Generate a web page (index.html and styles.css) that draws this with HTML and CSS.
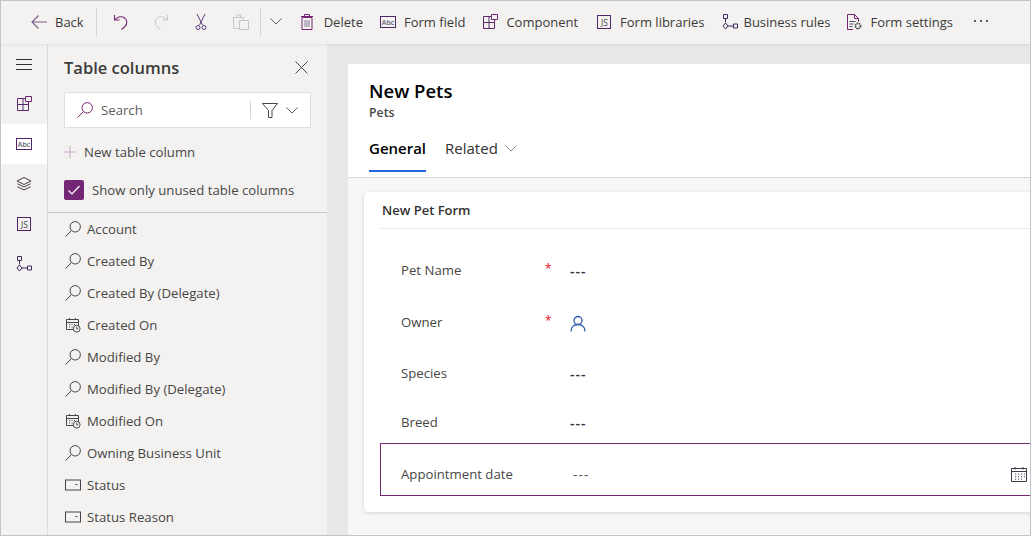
FILE: index.html
```html
<!DOCTYPE html>
<html lang="en">
<head>
    <meta charset="UTF-8">
    <title>New Pets - Form editor</title>
    <link rel="stylesheet" href="styles.css">
</head>
<body>
    <!-- shared icons -->
    <svg class="sprite" xmlns="http://www.w3.org/2000/svg">
        <symbol id="i-search" viewBox="0 0 16 16"><circle cx="10.200" cy="5.800" r="5.200" fill="none" stroke="currentColor"/><path d="M6.500 9.500 .6 15.500" fill="none" stroke="currentColor"/></symbol>
        <symbol id="i-comp" viewBox="0 0 16 16"><g fill="none"><path d="M1.500 2.500h11v12h-11zM1.500 8.500h11M7 2.500v12" stroke="#5a2a6c"/><path d="M9.500.5h6v5h-6z" fill="#f3f2f1" stroke="#742774"/></g></symbol>
        <symbol id="i-abc" viewBox="0 0 16 12"><rect x=".5" y=".5" width="15" height="11" fill="none" stroke="#4f2468"/><text x="8" y="8.800" text-anchor="middle" font-family="Open Sans" font-size="7" font-weight="600" fill="#5f5f78">Abc</text></symbol>
        <symbol id="i-js" viewBox="0 0 14 14"><rect x=".5" y=".5" width="13" height="13" fill="none" stroke="#4f2468"/><text x="7.500" y="11.300" text-anchor="middle" font-family="Open Sans" font-size="8.500" fill="#444">JS</text></symbol>
        <symbol id="i-rules" viewBox="0 0 16 16"><g fill="none" stroke="#3b2a5c"><path d="M1.500.5h4v4h-4zM11.500 10h4v4h-4z"/><path d="M3.500 4.500v4M6 12h5.500"/><path d="M3.500 9 6 12 3.500 15 1 12z"/></g></symbol>
        <symbol id="i-date" viewBox="0 0 16 16"><g fill="none" stroke="#484644"><path d="M1.500 2.500h12v10h-12zM1.500 5.500h12M4.500 1v2M10.500 1v2"/><circle cx="11.700" cy="11.700" r="3.400" fill="#f3f2f1"/><path d="M11.700 9.800v2h1.500"/></g><path d="M4 7h1v1H4zM6.500 7h1v1h-1zM9 7h1v1H9zM4 9.500h1v1H4zM6.500 9.500h1v1h-1z" fill="#484644"/></symbol>
        <symbol id="i-option" viewBox="0 0 16 11"><rect x=".5" y=".5" width="15" height="10" fill="none" stroke="#484644"/><path d="M10.500 5h2" stroke="#484644"/></symbol>
        <symbol id="i-chev" viewBox="0 0 12 7"><path d="M.5.500 6 6l5.500-5.500" fill="none" stroke="currentColor"/></symbol>
    </svg>

    <div class="frame">
        <header class="toolbar">
            <button class="tool tool-back">
                <svg class="ico" viewBox="0 0 16 16"><path d="M16 8H1M7.500 1.500 1 8l6.500 6.500" fill="none" stroke="#7d5a85" stroke-width="1.100"/></svg>
                <span>Back</span>
            </button>
            <span class="tool-sep"></span>
            <svg class="ico ico-undo" viewBox="0 0 16 16"><path d="M1.500 1v5h5M1.700 6C4 3 8 2 11 3.500c3.500 2 3.500 6.500 1 9L8.500 15.500" fill="none" stroke="#742774" stroke-width="1.100"/></svg>
            <svg class="ico ico-redo" viewBox="0 0 16 16"><path d="M14.500 1v5h-5M14.300 6C12 3 8 2 5 3.500c-3.500 2-3.500 6.500-1 9l3.500 3" fill="none" stroke="#c8c6c4"/></svg>
            <svg class="ico ico-cut" viewBox="0 0 16 16"><g fill="none" stroke="#5c3a78"><path d="M4 0 9.500 11M12 0 6.500 11"/><circle cx="5" cy="13.500" r="2"/><circle cx="11" cy="13.500" r="2"/></g></svg>
            <svg class="ico ico-paste" viewBox="0 0 16 16"><g fill="none" stroke="#c8c6c4"><path d="M.5 3.500h10v11H.5zM4 3.500V1h3.500v2.500"/><path d="M6.500 6.500h9v9h-9z" fill="#f3f2f1"/></g></svg>
            <span class="tool-sep tool-sep-2"></span>
            <svg class="chev chev-tool"><use href="#i-chev"/></svg>
            <button class="tool tool-delete">
                <svg class="ico" viewBox="0 0 16 16"><g fill="none" stroke="#742774"><path d="M2 3.500h10v12H2zM1 2.500h12M4.500 2.500V.5h5v2"/><path d="M5 6v7M7 6v7M9 6v7" stroke="#8a7a9a"/></g></svg>
                <span>Delete</span>
            </button>
            <button class="tool tool-field">
                <svg class="ico"><use href="#i-abc"/></svg>
                <span>Form field</span>
            </button>
            <button class="tool tool-comp">
                <svg class="ico"><use href="#i-comp"/></svg>
                <span>Component</span>
            </button>
            <button class="tool tool-libs">
                <svg class="ico ico-js"><use href="#i-js"/></svg>
                <span>Form libraries</span>
            </button>
            <button class="tool tool-rules">
                <svg class="ico"><use href="#i-rules"/></svg>
                <span>Business rules</span>
            </button>
            <button class="tool tool-settings">
                <svg class="ico" viewBox="0 0 16 16"><g fill="none" stroke="#742774"><path d="M7 15.500H1.500V.5h7l4 4v3M8.500.5v4h4"/><path d="M3.500 7.500h6M3.500 10h4M3.500 12.500h3" stroke="#5a4a6a"/></g><circle cx="12" cy="12" r="2.600" fill="none" stroke="#444" stroke-width="1.600" stroke-dasharray="1.500 .6"/></svg>
                <span>Form settings</span>
            </button>
            <span class="tool-more">
                <i></i><i></i><i></i>
            </span>
        </header>

        <div class="workspace">
            <nav class="rail">
                <div class="rail-item rail-menu"><span></span><span></span><span></span></div>
                <div class="rail-item"><svg class="ico"><use href="#i-comp"/></svg></div>
                <div class="rail-item active"><svg class="ico"><use href="#i-abc"/></svg></div>
                <div class="rail-item">
                    <svg class="ico" viewBox="0 0 16 16"><g fill="none" stroke="#4b3a4c"><path d="M8 1.500 15 5l-7 3.500L1 5z"/><path d="M1.500 7.800 8 11l6.500-3.200M1.500 10.800 8 14l6.500-3.200"/></g></svg>
                </div>
                <div class="rail-item"><svg class="ico ico-js"><use href="#i-js"/></svg></div>
                <div class="rail-item"><svg class="ico"><use href="#i-rules"/></svg></div>
            </nav>

            <aside class="panel">
                <div class="panel-head">
                    <h2>Table columns</h2>
                    <svg class="panel-close" viewBox="0 0 13 13"><path d="M.5.500l12 12M12.500.500l-12 12" fill="none" stroke="#484644"/></svg>
                </div>
                <div class="searchbox">
                    <svg class="search-ico"><use href="#i-search"/></svg>
                    <span class="search-text">Search</span>
                    <span class="search-sep"></span>
                    <svg class="filter-ico" viewBox="0 0 16 15"><path d="M.5.500h15L10 7.500v7H6.500v-7z" fill="none" stroke="#484644"/></svg>
                    <svg class="chev"><use href="#i-chev"/></svg>
                </div>
                <div class="new-column">
                    <svg class="plus" viewBox="0 0 12 12"><path d="M6 0v12M0 6h12" stroke="#c9a9c9"/></svg>
                    <span>New table column</span>
                </div>
                <label class="unused">
                    <span class="checkbox"><svg viewBox="0 0 20 20"><path d="M4.500 10.500l3.500 3.500 7.500-8" fill="none" stroke="#fff" stroke-width="1.200"/></svg></span>
                    <span>Show only unused table columns</span>
                </label>
                <ul class="columns">
                    <li><svg class="col-ico"><use href="#i-search"/></svg>Account</li>
                    <li><svg class="col-ico"><use href="#i-search"/></svg>Created By</li>
                    <li><svg class="col-ico"><use href="#i-search"/></svg>Created By (Delegate)</li>
                    <li><svg class="col-ico"><use href="#i-date"/></svg>Created On</li>
                    <li><svg class="col-ico"><use href="#i-search"/></svg>Modified By</li>
                    <li><svg class="col-ico"><use href="#i-search"/></svg>Modified By (Delegate)</li>
                    <li><svg class="col-ico"><use href="#i-date"/></svg>Modified On</li>
                    <li><svg class="col-ico"><use href="#i-search"/></svg>Owning Business Unit</li>
                    <li><svg class="col-ico"><use href="#i-option"/></svg>Status</li>
                    <li><svg class="col-ico"><use href="#i-option"/></svg>Status Reason</li>
                </ul>
            </aside>

            <main class="main">
                <section class="record-head">
                    <h1>New Pets</h1>
                    <div class="entity">Pets</div>
                    <div class="tabs">
                        <span class="tab selected">General</span>
                        <span class="tab">Related<svg class="chev chev-tab"><use href="#i-chev"/></svg></span>
                    </div>
                </section>
                <section class="body-area">
                    <div class="card">
                        <div class="card-title">New Pet Form</div>
                        <div class="row row-a"><span class="lbl">Pet Name</span><span class="req">*</span><span class="val">---</span></div>
                        <div class="row row-b">
                            <span class="lbl">Owner</span><span class="req">*</span>
                            <svg class="owner-ico" viewBox="0 0 16 16"><circle cx="8" cy="5" r="4" fill="none" stroke="#2b5cab" stroke-width="1.300"/><path d="M1 16c0-4.500 3-7 7-7s7 2.500 7 7" fill="none" stroke="#2b5cab" stroke-width="1.300"/></svg>
                        </div>
                        <div class="row row-c"><span class="lbl">Species</span><span class="req"></span><span class="val">---</span></div>
                        <div class="row row-d"><span class="lbl">Breed</span><span class="req"></span><span class="val">---</span></div>
                        <div class="row row-sel">
                            <span class="lbl">Appointment date</span><span class="req req-sel"></span><span class="val val-plain">---</span>
                            <svg class="cal-ico" viewBox="0 0 16 15"><g fill="none" stroke="#3c3a48"><path d="M.5 1.500h15v13H.5zM.5 4.500h15" /><path d="M4 0v2.500M12 0v2.500"/></g><path d="M4 6.500h1.200v1.200H4zM7 6.500h1.200v1.200H7zM10 6.500h1.200v1.200H10zM13 6.500h1v1.200h-1zM4 9h1.200v1.200H4zM7 9h1.200v1.200H7zM10 9h1.200v1.200H10zM13 9h1v1.200h-1zM4 11.500h1.200v1.200H4zM7 11.500h1.200v1.200H7zM10 11.500h1.200v1.200H10z" fill="#6a6878"/></svg>
                        </div>
                    </div>
                </section>
            </main>
        </div>
    </div>
</body>
</html>
```

FILE: styles.css
```css
* {
    box-sizing: border-box;
}
html, body {
    margin: 0;
    height: 100%;
    overflow: hidden;
}
body {
    font-family: "Open Sans", "Noto Sans", sans-serif;
    font-size: 13px;
    color: #323130;
    background-color: #fff;
}
h1, h2, ul {
    margin: 0;
    padding: 0;
}
.sprite {
    display: none;
}
.frame {
    width: 1031px;
    height: 536px;
    border: 1px solid #c4c4c4;
    display: flex;
    flex-direction: column;
    overflow: hidden;
}

/* command bar */
.toolbar {
    height: 43px;
    flex: none;
    display: flex;
    align-items: center;
    background-color: #f3f2f1;
    box-shadow: 0 1px 3px rgba(0,0,0,0.08);
    position: relative;
    z-index: 2;
    padding: 0 0 2px 30px;
    white-space: nowrap;
}
.tool {
    display: flex;
    align-items: center;
    gap: 8px;
    padding: 0;
    border: none;
    background: none;
    font: inherit;
    color: #3b3a39;
}
.ico {
    width: 16px;
    height: 16px;
    flex: none;
    display: block;
}
.tool-sep {
    width: 1px;
    height: 28px;
    background-color: #d6d4d2;
    margin-left: 12px;
}
.ico-undo { margin-left: 16px; }
.ico-redo { margin-left: 24px; }
.ico-cut { margin-left: 24px; }
.ico-paste { margin-left: 24px; }
.tool-sep-2 { margin-left: 11px; }
.chev {
    width: 12px;
    height: 7px;
    flex: none;
    color: #605e5c;
}
.chev-tool { margin-left: 9px; }
.tool-delete { margin-left: 18px; }
.tool-field { margin-left: 17px; }
.tool-comp { margin-left: 17px; }
.tool-libs { margin-left: 18px; }
.tool-rules { margin-left: 17px; gap: 6px; }
.tool-settings { margin-left: 16px; }
.tool-more {
    display: flex;
    gap: 4px;
    margin-left: 21px;
    margin-top: -2px;
}
.tool-more i {
    width: 2px;
    height: 2px;
    background-color: #605e5c;
}

.workspace {
    flex: 1;
    display: flex;
    min-height: 0;
}

/* left rail */
.rail {
    width: 47px;
    flex: none;
    background-color: #f3f2f1;
    border-right: 1px solid #dddbd9;
}
.rail-item {
    height: 40px;
    display: flex;
    align-items: center;
    justify-content: center;
}
.rail-item.active {
    background-color: #fff;
}
.rail-menu {
    flex-direction: column;
    gap: 4px;
}
.rail-menu span {
    width: 16px;
    height: 1px;
    background-color: #323130;
}
.ico-js {
    width: 14px;
    height: 14px;
    margin: 0 1px;
}

/* table columns panel */
.panel {
    width: 279px;
    flex: none;
    background-color: #f3f2f1;
    overflow: hidden;
    font-size: 13.200px;
}
.panel-head {
    height: 48px;
    display: flex;
    align-items: center;
    justify-content: space-between;
    padding: 0 19px 1px 16px;
}
.panel-head h2 {
    font-size: 16.500px;
    font-weight: 600;
    color: #3b3a39;
}
.panel-close {
    width: 13px;
    height: 13px;
}
.searchbox {
    height: 36px;
    margin: 0 16px;
    display: flex;
    align-items: center;
    background-color: #fff;
    border: 1px solid #e1dfdd;
    padding-left: 12px;
}
.search-ico {
    width: 16px;
    height: 16px;
    color: #742774;
}
.search-text {
    margin-left: 8px;
    width: 149px;
    color: #605e5c;
}
.search-sep {
    width: 1px;
    height: 18px;
    background-color: #d6d4d2;
}
.filter-ico {
    width: 16px;
    height: 15px;
    margin-left: 11px;
}
.searchbox .chev {
    margin-left: 8px;
}
.new-column {
    display: flex;
    align-items: center;
    gap: 8px;
    height: 20px;
    margin: 14px 0 0 16px;
    color: #484644;
}
.plus {
    width: 12px;
    height: 12px;
}
.unused {
    display: flex;
    align-items: center;
    gap: 8px;
    margin: 18px 0 0 16px;
    color: #484644;
}
.checkbox {
    width: 20px;
    height: 20px;
    background-color: #742774;
    border-radius: 2px;
}
.checkbox svg {
    display: block;
}
.columns {
    list-style: none;
    margin-top: 12px;
    border-top: 1px solid #c8c6c4;
}
.columns li {
    height: 32px;
    display: flex;
    align-items: center;
    gap: 6px;
    padding-left: 17px;
    color: #484644;
}
.col-ico {
    width: 16px;
    height: 16px;
    flex: none;
    color: #484644;
}

/* record area */
.main {
    flex: 1;
    min-width: 0;
    background-color: #e9e8e7;
    padding: 20px 0 0 21px;
    display: flex;
    flex-direction: column;
    overflow: hidden;
}
.record-head {
    height: 114px;
    flex: none;
    background-color: #fff;
    border-bottom: 1px solid #d8d6d4;
    padding: 13px 0 0 21px;
}
.record-head h1 {
    font-size: 18.500px;
    font-weight: 600;
    line-height: 27px;
    margin-bottom: 1px;
    color: #000;
}
.entity {
    font-size: 12.300px;
    font-weight: 600;
    line-height: 15px;
    color: #484644;
}
.tabs {
    display: flex;
    gap: 19px;
    margin-top: 17px;
}
.tab {
    height: 35px;
    display: flex;
    align-items: center;
    font-size: 15px;
    color: #323130;
    padding-bottom: 14px;
}
.tab.selected {
    font-weight: 600;
    color: #000;
    box-shadow: inset 0 -2px 0 #2266e3;
}
.chev-tab {
    margin: 1px 0 0 7px;
    color: #8a8886;
}
.body-area {
    flex: 1;
    background-color: #f8f7f6;
    padding: 14px 0 0 16px;
}
.card {
    background-color: #fff;
    height: 320px;
    margin-right: -10px;
    border-radius: 4px;
    box-shadow: 0 1px 4px rgba(0,0,0,0.15);
    padding: 0 0 0 16px;
}
.card-title {
    height: 37px;
    padding: 10px 0 0 2px;
    line-height: 16px;
    border-bottom: 1px solid #edebe9;
    font-size: 13px;
    font-weight: 600;
    color: #323130;
}
.row {
    display: flex;
    align-items: center;
    padding-left: 21px;
    font-size: 13.200px;
}
.row-a { height: 51px; margin-top: 16px; }
.row-a .lbl { margin-top: -2px; }
.row-a .val { margin-top: 0; }
.row-b { height: 52px; }
.row-c { height: 50px; }
.row-d { height: 45px; padding-top: 3px; }
.row-sel {
    height: 53px;
    padding: 9px 13px 0 20px;
    border: 1px solid #742774;
    border-width: 1px 0 1px 1px;
}
.lbl {
    width: 144px;
    flex: none;
    color: #484644;
}
.req {
    width: 25px;
    flex: none;
    color: #e81123;
    font-size: 12px;
    margin-top: -4px;
}
.req-sel {
    width: 28px;
}
.val {
    font-size: 14px;
    font-weight: 600;
    letter-spacing: 1px;
    color: #323130;
    margin-top: 1px;
}
.val-plain {
    font-weight: 400;
    color: #605e5c;
    margin-top: 0;
}
.owner-ico {
    width: 16px;
    height: 17px;
    margin-top: 2px;
}
.cal-ico {
    width: 16px;
    height: 15px;
    margin-left: auto;
}
```
